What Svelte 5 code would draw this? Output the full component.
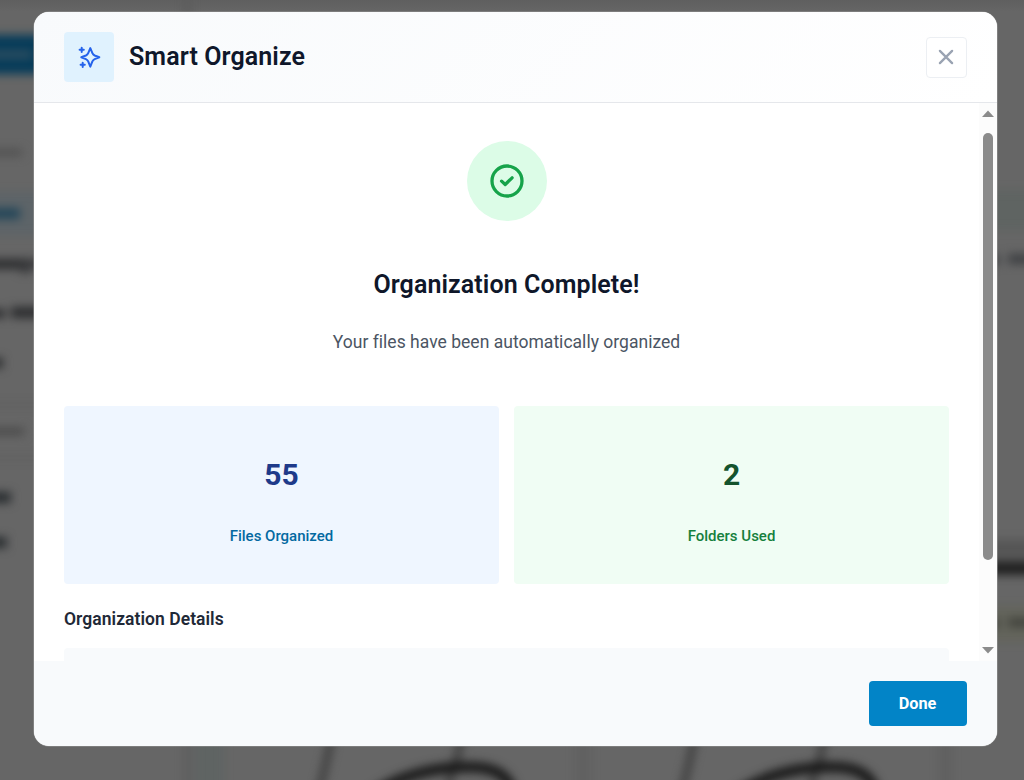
<script>
  const stats = [
    { value: '55', label: 'Files Organized', tone: 'blue' },
    { value: '2', label: 'Folders Used', tone: 'green' }
  ];
</script>

<div class="screen">
  <svg class="backdrop" viewBox="0 0 1024 780" aria-hidden="true">
    <defs>
      <filter id="soft" x="-20" y="-20" width="1064" height="820" filterUnits="userSpaceOnUse" color-interpolation-filters="sRGB">
        <feGaussianBlur stdDeviation="5" />
      </filter>
      <linearGradient id="top" x2="0" y2="1">
        <stop offset="0" stop-color="#5f5f5f" />
        <stop offset="1" stop-color="#666666" />
      </linearGradient>
    </defs>
    <rect width="1024" height="780" fill="#666666" />
    <rect width="1024" height="12" fill="url(#top)" />
    <g filter="url(#soft)">
      <rect x="-20" y="35" width="120" height="39" fill="#053b59" />
      <rect x="-20" y="50" width="52" height="9" fill="#2b4d60" />
      <rect x="-20" y="149" width="42" height="7" fill="#505050" />
      <rect x="-20" y="192" width="80" height="43" fill="#5d6468" />
      <rect x="-20" y="208" width="40" height="11" fill="#224558" />
      <rect x="-20" y="259" width="50" height="10" fill="#2b2c2e" />
      <rect x="20" y="263" width="11" height="10" fill="#38393b" />
      <rect x="31" y="259" width="30" height="9" fill="#38393b" />
      <rect x="-20" y="309" width="25" height="9" fill="#2b2c2e" />
      <rect x="11" y="307" width="40" height="11" fill="#2b2c2e" />
      <rect x="-20" y="358" width="23" height="10" fill="#2b2d2f" />
      <rect x="-20" y="404" width="80" height="2" fill="#5a5a5a" />
      <rect x="-20" y="428" width="44" height="7" fill="#484848" />
      <rect x="-20" y="457" width="80" height="2" fill="#5a5a5a" />
      <rect x="-20" y="492" width="31" height="11" fill="#292d30" />
      <rect x="-20" y="537" width="27" height="11" fill="#292d30" />
      <rect x="184" y="-20" width="7" height="820" fill="#5d5d5d" />
      <rect x="195" y="700" width="29" height="100" fill="#5f6463" />
      <rect x="575" y="700" width="16" height="100" fill="#616161" />
      <rect x="939" y="700" width="13" height="100" fill="#606060" />
      <rect x="960" y="190" width="84" height="40" fill="#5f6462" />
      <rect x="1008" y="254" width="36" height="10" fill="#3e4043" />
      <rect x="990" y="255" width="9" height="10" fill="#3e4043" />
      <rect x="960" y="540" width="84" height="17" fill="#555555" />
      <rect x="960" y="561" width="84" height="14" fill="#202020" />
      <rect x="960" y="606" width="84" height="36" fill="#63645b" />
      <rect x="1008" y="618" width="36" height="9" fill="#41423c" />
      <rect x="970" y="619" width="29" height="9" fill="#41423c" />
      <g fill="none" stroke-linecap="round">
        <path d="M332 730 C330 752 324 770 317 800" stroke="#3e3e3e" stroke-width="7" />
        <path d="M463 730 C459 752 455 768 447 790" stroke="#3e3e3e" stroke-width="7" />
        <path d="M370 796 C400 775 432 767 469 767 C495 767 509 775 513 794" stroke="#141414" stroke-width="10" />
        <path d="M695 730 C693 752 687 770 680 800" stroke="#3e3e3e" stroke-width="7" />
        <path d="M826 730 C822 752 818 768 810 790" stroke="#3e3e3e" stroke-width="7" />
        <path d="M733 796 C763 775 795 767 832 767 C858 767 872 775 876 794" stroke="#141414" stroke-width="10" />
      </g>
    </g>
  </svg>

  <div class="modal" role="dialog" aria-labelledby="title">
    <header>
      <div class="badge">
        <svg width="26" height="26" viewBox="0 0 26 26" fill="none" stroke="#2563eb" stroke-width="2" stroke-linecap="round" stroke-linejoin="round">
          <path d="M14.3 4.1 L16.4 9.2 Q17.1 10.8 18.7 11.5 L23.3 13.3 L18.7 15.1 Q17.1 15.8 16.4 17.4 L14.3 22.6 L12.2 17.4 Q11.5 15.8 9.9 15.1 L5.3 13.3 L9.9 11.5 Q11.5 10.8 12.2 9.2 Z" />
          <path d="M5.7 3.7v4.2M3.6 5.8h4.2M6.7 18.7v4.2M4.6 20.8h4.2" />
        </svg>
      </div>
      <h2 id="title">Smart Organize</h2>
      <button class="close" aria-label="Close">
        <svg width="16" height="16" viewBox="0 0 16 16" fill="none" stroke="#9aa3b2" stroke-width="2.3" stroke-linecap="round">
          <path d="M1.9 1.9 14.1 14.1M14.1 1.9 1.9 14.1" />
        </svg>
      </button>
    </header>

    <div class="body">
      <div class="content">
        <div class="success">
          <svg width="36" height="36" viewBox="0 0 24 24" fill="none" stroke="#16a34a" stroke-width="2.2" stroke-linecap="round" stroke-linejoin="round">
            <circle cx="12" cy="12" r="10" />
            <path d="m8.4 12.1 2.4 2.2 4.6-4.4" />
          </svg>
        </div>
        <h3>Organization Complete!</h3>
        <p class="sub">Your files have been automatically organized</p>
        <div class="stats">
          {#each stats as s}
            <div class="stat {s.tone}">
              <div class="value">{s.value}</div>
              <div class="label">{s.label}</div>
            </div>
          {/each}
        </div>
        <h4>Organization Details</h4>
        <div class="details"></div>
      </div>
      <div class="scroll">
        <svg width="12" height="7" viewBox="0 0 12 7"><path d="M0 7 6 .4 12 7Z" fill="#8b8b8b" /></svg>
        <div class="thumb"></div>
        <svg class="down" width="12" height="7" viewBox="0 0 12 7"><path d="M0 0 6 6.6 12 0Z" fill="#8b8b8b" /></svg>
      </div>
    </div>

    <footer><button class="done">Done</button></footer>
  </div>
</div>

<style>
  :global(body) { margin: 0; overflow: hidden; }
  * { box-sizing: border-box; }
  .screen {
    position: relative;
    width: 1024px;
    height: 780px;
    padding: 12px 27.5px 0 34px;
    overflow: hidden;
    font-family: Roboto, "Liberation Sans", sans-serif;
  }
  .backdrop { position: absolute; inset: 0; width: 1024px; height: 780px; }
  .modal {
    position: relative;
    display: flex;
    flex-direction: column;
    height: 734px;
    border-radius: 15px;
    background: #fff;
    overflow: hidden;
    box-shadow: 0 0 0 0.6px #939393;
  }
  header {
    display: flex;
    align-items: center;
    flex: none;
    height: 91px;
    padding: 0 30px;
    border-bottom: 1px solid #e5e7eb;
    background: linear-gradient(135deg, #f8fafc 0%, #fff 100%);
  }
  .badge {
    display: grid;
    place-items: center;
    width: 50px;
    height: 50px;
    border-radius: 4px;
    background: #e0f2fe;
  }
  h2, h3, h4, p { margin: 0; }
  h2 {
    margin-left: 15px;
    font-size: 25px;
    line-height: 30px;
    font-weight: 600;
    letter-spacing: 0.1px;
    color: #0f172a;
  }
  button { font-family: inherit; }
  .close {
    display: grid;
    place-items: center;
    width: 41px;
    height: 41px;
    margin-left: auto;
    padding: 0;
    border: 1px solid #eceff3;
    border-radius: 4px;
    background: #fff;
  }
  .body { display: flex; flex: none; height: 558px; overflow: hidden; }
  .content {
    display: flex;
    flex-direction: column;
    align-items: center;
    flex: none;
    width: 945px;
    padding: 38.4px 30px 0;
  }
  .success {
    display: grid;
    place-items: center;
    flex: none;
    width: 80px;
    height: 80px;
    border-radius: 50%;
    background: #dcfce7;
  }
  h3 {
    margin-top: 48.6px;
    font-size: 25px;
    line-height: 30px;
    font-weight: 600;
    letter-spacing: 0.09px;
    color: #0f172a;
  }
  .sub {
    margin-top: 30px;
    font-size: 17.5px;
    line-height: 24px;
    letter-spacing: 0.02px;
    color: #4b5563;
  }
  .stats {
    display: grid;
    grid-template-columns: 1fr 1fr;
    gap: 15px;
    flex: none;
    width: 100%;
    height: 178px;
    margin-top: 52px;
  }
  .stat {
    display: flex;
    flex-direction: column;
    align-items: center;
    padding-top: 51px;
    border-radius: 4px;
  }
  .blue { background: #eff6ff; color: #1e3a8a; }
  .green { background: #f0fdf4; color: #14532d; }
  .value { font-size: 30px; line-height: 36px; font-weight: 700; }
  .label { margin-top: 32px; font-size: 15px; line-height: 22px; font-weight: 500; }
  .blue .label { color: #0369a1; }
  .green .label { color: #15803d; }
  h4 {
    align-self: flex-start;
    margin-top: 23px;
    font-size: 17.5px;
    line-height: 24px;
    font-weight: 600;
    letter-spacing: 0.05px;
    color: #1f2937;
  }
  .details {
    flex: none;
    width: 100%;
    height: 60px;
    margin-top: 17px;
    border-radius: 4px;
    background: #f8fafc;
  }
  .scroll {
    display: flex;
    flex-direction: column;
    align-items: center;
    flex: 1;
    padding: 7px 0 7px;
    background: #fcfcfc;
  }
  .scroll svg { display: block; flex: none; }
  .scroll .down { margin-top: auto; }
  .thumb {
    width: 10px;
    height: 427px;
    margin-top: 16px;
    border-radius: 5px;
    background: #8b8b8b;
  }
  footer {
    display: flex;
    justify-content: flex-end;
    align-items: center;
    flex: 1;
    padding: 0 30px;
    background: #f8fafc;
  }
  .done {
    width: 98px;
    height: 45px;
    border: 0;
    border-radius: 4px;
    background: #0284c7;
    color: #fff;
    font-size: 16.25px;
    font-weight: 700;
  }
</style>
